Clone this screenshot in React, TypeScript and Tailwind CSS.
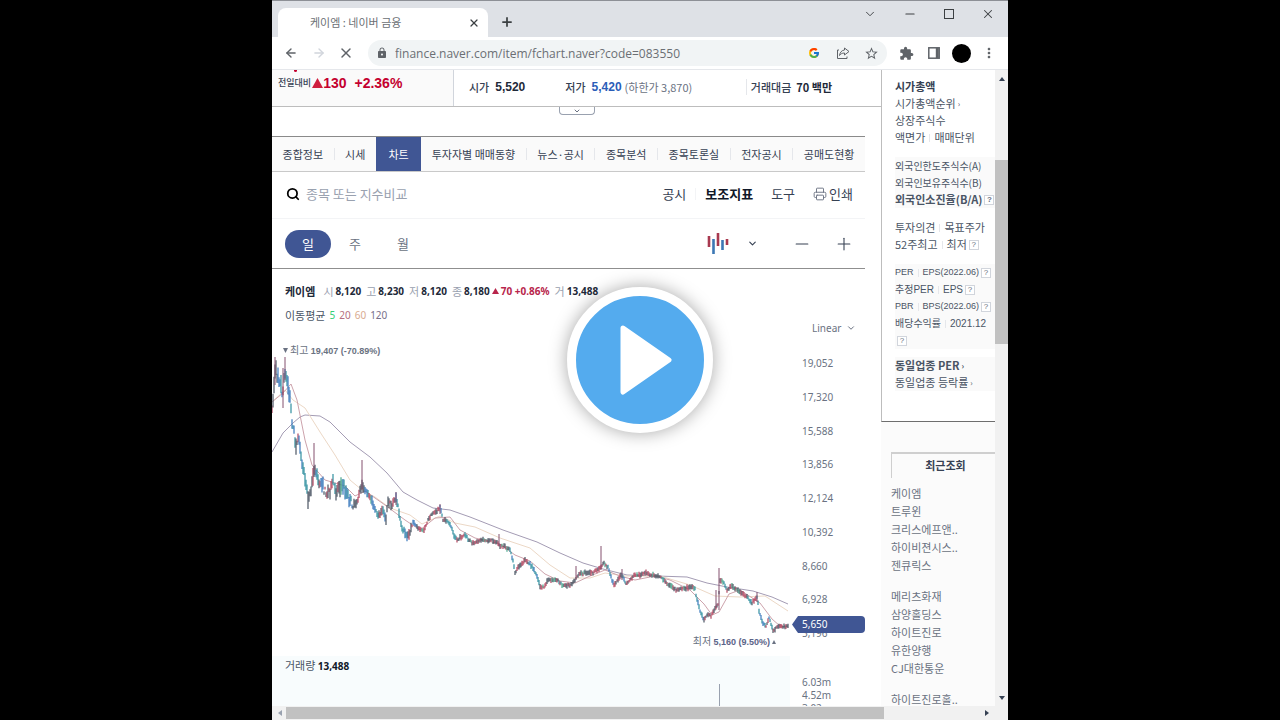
// src/App.tsx
import React from "react";
import { ArrowLeft, ArrowRight, ChevronDown, Minus, Plus, Printer, Search, Square, X } from "lucide-react";
import { FcGoogle } from "react-icons/fc";
import { MdExtension, MdLock, MdMoreVert, MdStarBorder } from "react-icons/md";

const tabs = [
  { label: "종합정보" },
  { label: "시세", sep: true },
  { label: "차트", active: true },
  { label: "투자자별 매매동향" },
  { label: "뉴스·공시", sep: true },
  { label: "종목분석", sep: true },
  { label: "종목토론실", sep: true },
  { label: "전자공시", sep: true },
  { label: "공매도현황", sep: true },
];

const ohlc = [
  { label: "시", value: "8,120" },
  { label: "고", value: "8,230" },
  { label: "저", value: "8,120" },
  { label: "종", value: "8,180", change: true },
  { label: "거", value: "13,488" },
];

const axis = ["19,052", "17,320", "15,588", "13,856", "12,124", "10,392", "8,660", "6,928", "5,196"];

const recent = [
  ["케이엠", "트루윈", "크리스에프앤..", "하이비젼시스..", "젠큐릭스"],
  ["메리츠화재", "삼양홀딩스", "하이트진로", "유한양행", "CJ대한통운"],
  ["하이트진로홀.."],
];

// [x, y] along the price curve, in chart units
const price = [
  [0, 66], [1, 58], [3, 32], [6, 34], [9, 48], [11, 52], [13, 32], [14, 38], [16, 47], [18, 60], [21, 88],
  [24, 104], [27, 102], [30, 118], [33, 138], [36, 158], [39, 150], [42, 132], [44, 132], [47, 146], [49, 140],
  [52, 150], [55, 153], [58, 148], [61, 143], [64, 151], [67, 146], [71, 146], [75, 156], [78, 160], [81, 167],
  [85, 162], [87, 155], [90, 147], [93, 150], [97, 157], [100, 160], [103, 170], [107, 177], [111, 170],
  [114, 178], [116, 163], [120, 164], [124, 158], [126, 167], [129, 186], [133, 193], [136, 198], [139, 189],
  [141, 182], [145, 187], [149, 190], [152, 190], [156, 180], [160, 174], [164, 172], [168, 167], [171, 180],
  [175, 181], [179, 186], [182, 195], [185, 200], [189, 197], [193, 195], [197, 200], [202, 204], [206, 201],
  [211, 199], [215, 201], [220, 200], [225, 203], [228, 206], [233, 207], [238, 210], [241, 221], [243, 233],
  [246, 227], [250, 224], [253, 220], [257, 223], [261, 228], [265, 236], [268, 246], [272, 248], [275, 241],
  [280, 240], [286, 240], [291, 246], [296, 245], [301, 243], [305, 236], [310, 233], [316, 233], [322, 232],
  [328, 228], [332, 223], [336, 227], [339, 237], [342, 245], [346, 239], [350, 235], [354, 244], [358, 240],
  [362, 235], [368, 235], [374, 233], [379, 235], [384, 235], [389, 237], [394, 243], [399, 246], [404, 250],
  [409, 248], [414, 248], [420, 247], [423, 250], [425, 260], [428, 270], [432, 280], [435, 274], [439, 276],
  [443, 268], [446, 265], [448, 240], [452, 243], [455, 250], [460, 246], [465, 250], [470, 253], [476, 258],
  [480, 263], [485, 257], [487, 270], [490, 282], [494, 287], [497, 278], [501, 291], [505, 287], [510, 287],
  [516, 286],
];

// [x, top, bottom]
const spikes = [
  [13, 17, 40], [3, 17, 45], [11, 28, 68], [42, 103, 134], [90, 120, 150], [124, 152, 165], [168, 164, 174],
  [227, 194, 206], [304, 226, 240], [329, 206, 230], [350, 229, 240], [444, 250, 268], [447, 228, 270], [485, 252, 262],
];

const averages = [
  {
    color: "#a49cb4",
    points:
      "0,112 11,93 21,83 28,77 33,75 48,76 58,82 66,90 78,102 98,117 115,133 131,152 145,160 161,168 178,170 198,177 231,190 265,202 288,213 311,223 331,229 355,235 385,236 415,237 435,243 455,247 481,251 500,257 516,264",
  },
  {
    color: "#ecd8c6",
    points:
      "0,62 13,50 21,60 33,68 48,92 63,115 78,140 90,150 103,157 118,168 138,175 150,184 168,176 183,183 203,187 228,198 258,208 278,225 298,238 318,238 333,233 353,236 388,236 418,245 443,256 468,257 493,256 516,271",
  },
  {
    color: "#cda3ac",
    points:
      "0,62 11,53 19,44 25,60 33,100 40,125 53,140 73,146 83,156 93,151 113,165 133,180 148,190 163,178 178,177 188,190 203,198 228,204 243,215 258,221 273,234 288,241 303,243 318,236 333,230 348,236 363,240 383,236 398,240 418,250 432,264 440,275 447,272 457,254 468,250 488,263 500,279 508,286 516,287",
  },
];

const candleColors = ["#b2455f", "#2f8f9f", "#4b5563", "#3a78bd", "#4aa58c"];

function priceAt(x: number) {
  const i = price.findIndex((p) => p[0] >= x);
  if (i <= 0) return price[0][1];
  const [x0, y0] = price[i - 1];
  const [x1, y1] = price[i];
  return y0 + ((y1 - y0) * (x - x0)) / (x1 - x0);
}

function makeCandles() {
  const list = [];
  let seed = 7;
  const rand = () => {
    seed = (seed * 16807) % 2147483647;
    return seed / 2147483647;
  };
  for (let x = 0; x <= 516; x++) {
    const mid = priceAt(x);
    const spread = x < 20 ? 11 : x < 80 ? 8 : x < 140 ? 5 : 2;
    const slope = priceAt(Math.min(516, x + 1)) - mid;
    const pick = rand();
    let color = candleColors[2];
    if (slope > 1.2) color = pick < 0.6 ? candleColors[1] : candleColors[3];
    else if (slope < -0.3) color = pick < 0.6 ? candleColors[0] : candleColors[2];
    else if (pick < 0.3) color = candleColors[0];
    else if (pick < 0.5) color = candleColors[4];
    const drift = (rand() - 0.5) * spread * 0.8;
    list.push({ x, y1: mid + drift - 1 - rand() * spread, y2: mid + drift + 1 + rand() * spread, color });
  }
  return list;
}

const candles = makeCandles();

function Triangle({ className }: { className: string }) {
  return (
    <svg viewBox="0 0 10 10" preserveAspectRatio="none" className={className} aria-hidden="true">
      <path d="M5 0 L10 10 H0 Z" fill="currentColor" />
    </svg>
  );
}

function Help() {
  return (
    <button className="ml-[2px] h-[10px] w-[10px] shrink-0 border border-gray-300 bg-white text-center font-['Liberation_Sans'] text-[8px] leading-[8px] text-gray-500">
      ?
    </button>
  );
}

function Bar() {
  return <i className="mx-1 h-2 w-px shrink-0 bg-gray-200" />;
}

function BrowserBar() {
  return (
    <header className="shrink-0 border-t border-[#8d9096] bg-[#dee1e6]">
      {/* Tab strip */}
      <div className="flex h-9 items-end pl-[6px]">
        <div className="flex h-[29px] w-[210px] items-center justify-between rounded-t-lg bg-white pr-2 pl-8 text-[11px] text-[#6b6f74]">
          <span>케이엠 : 네이버 금융</span>
          <button aria-label="탭 닫기">
            <X className="h-3 w-3 text-[#3c4043]" strokeWidth={2.5} />
          </button>
        </div>
        <button aria-label="새 탭" className="mb-2 ml-3">
          <Plus className="h-[14px] w-[14px] text-[#3c4043]" strokeWidth={3} />
        </button>
        <div className="mb-4 ml-auto flex items-center gap-[26px] pr-[13px] text-[#3c4043]">
          <button aria-label="탭 검색"><ChevronDown className="h-[14px] w-[14px]" strokeWidth={1.6} /></button>
          <button aria-label="최소화"><Minus className="h-[14px] w-[14px]" strokeWidth={2} /></button>
          <button aria-label="최대화" className="flex h-3 w-3 items-center justify-center">
            <i className="h-[10px] w-[10px] border border-[#3c4043]" />
          </button>
          <button aria-label="닫기"><X className="h-[14px] w-[14px]" strokeWidth={1.8} /></button>
        </div>
      </div>

      {/* Address row */}
      <div className="flex h-[33px] items-center border-b border-gray-200 bg-white pr-[11px] pl-3 text-[#5f6368]">
        <button aria-label="뒤로"><ArrowLeft className="h-[14px] w-[14px]" strokeWidth={2.4} /></button>
        <button aria-label="앞으로" className="ml-[14px]"><ArrowRight className="h-[14px] w-[14px] text-gray-300" strokeWidth={2.4} /></button>
        <button aria-label="중지" className="ml-3"><X className="h-4 w-4" strokeWidth={2.2} /></button>
        <div className="ml-[14px] flex h-[26px] flex-1 items-center rounded-full bg-[#f1f4f5] px-2">
          <MdLock className="h-3 w-3 shrink-0" />
          <input
            aria-label="주소"
            defaultValue="finance.naver.com/item/fchart.naver?code=083550"
            className="ml-[7px] min-w-0 flex-1 bg-transparent pt-[2px] font-['Open_Sans',sans-serif] text-[12px] text-[#6b6f74] outline-none"
          />
          <FcGoogle className="h-3 w-3" />
          <button aria-label="공유" className="ml-4">
            <svg viewBox="0 0 14 14" className="h-[14px] w-[14px]" fill="none" stroke="currentColor" strokeWidth="1">
              <path d="M3 4 H1.5 V12.5 H11 V10.5" />
              <path d="M8.5 2 L13 5.5 L8.5 9 V7 C6 7 4.500 8 3.500 9.500 C4 6.500 5.500 4.300 8.500 4 Z" strokeLinejoin="round" />
            </svg>
          </button>
          <button aria-label="북마크" className="ml-[14px]"><MdStarBorder className="h-[15px] w-[15px]" /></button>
        </div>
        <button aria-label="확장 프로그램" className="ml-3"><MdExtension className="h-[15px] w-[15px]" /></button>
        <button aria-label="측면 패널" className="ml-[14px]">
          <svg viewBox="0 0 12 12" className="h-3 w-3" fill="none" stroke="currentColor" strokeWidth="1.500">
            <rect x="0.800" y="0.800" width="10.400" height="10.400" />
            <path d="M9.300 1 V11" strokeWidth="3" />
          </svg>
        </button>
        <button aria-label="프로필" className="ml-3 h-[19px] w-[19px] rounded-full bg-black" />
        <button aria-label="메뉴" className="ml-[10px]"><MdMoreVert className="h-4 w-4" /></button>
      </div>
    </header>
  );
}

function Summary() {
  return (
    <div className="flex h-[37px] border-b border-[#bdbdbd] text-[11px]">
      <div className="w-[182px] shrink-0 border-r border-gray-300 bg-[#fafafa] pl-[6px]">
        <i className="ml-4 block h-[2px] w-[3px] rounded-b bg-[#c4002f]" />
        <div className="flex h-[22px] items-center">
          <span className="text-[9px] font-medium text-gray-700">전일대비</span>
          <Triangle className="ml-px h-[10px] w-[11px] text-[#cf1f3f]" />
          <strong className="font-['Liberation_Sans'] text-[14px] text-[#c4002f]">130</strong>
          <strong className="ml-2 font-['Liberation_Sans'] text-[14px] text-[#c4002f]">+2.36%</strong>
        </div>
      </div>
      <dl className="flex flex-1 items-center pb-[2px] pl-[15px] text-gray-700">
        <dt className="font-medium">시가</dt>
        <dd className="ml-[6px] font-['Liberation_Sans'] text-[12px] font-bold text-gray-800">5,520</dd>
        <dt className="ml-10 font-medium">저가</dt>
        <dd className="ml-[6px] font-['Liberation_Sans'] text-[12px] font-bold text-[#2a5db8]">5,420</dd>
        <dd className="ml-[3px] text-gray-500">(하한가 3,870)</dd>
        <dt className="mr-[5px] ml-auto border-l border-gray-200 pl-1 font-medium">거래대금</dt>
        <dd className="mr-[49px] font-bold text-gray-800">70 백만</dd>
      </dl>
    </div>
  );
}

function Toolbar() {
  return (
    <>
      <nav className="mt-5 border-t border-b border-t-[#8a8a8a] border-b-[#c9c9c9] bg-[#fafafa]">
        <ul className="flex h-[34px] text-[11px] text-gray-700">
          {tabs.map((tab) => (
            <li key={tab.label} className={tab.active ? "flex flex-auto items-center bg-[#405694] px-[2px] text-white" : "flex flex-auto items-center"}>
              {tab.sep && <i className="h-3 w-px bg-gray-200" />}
              <a href="#chart" className="flex-1 text-center whitespace-nowrap">{tab.label}</a>
            </li>
          ))}
        </ul>
      </nav>

      <div className="flex h-[47px] items-center border-b border-gray-100 pr-3 pb-[2px] pl-[14px] text-[13px] text-gray-700">
        <Search className="h-[14px] w-[14px] text-black" strokeWidth={3} />
        <input
          aria-label="종목 또는 지수비교"
          placeholder="종목 또는 지수비교"
          className="ml-[6px] min-w-0 flex-1 outline-none placeholder:text-gray-400"
        />
        <button>공시</button>
        <i className="mx-[9px] h-3 w-px bg-gray-100" />
        <button className="font-bold text-gray-900">보조지표</button>
        <button className="ml-[18px]">도구</button>
        <button className="ml-[18px] flex items-center gap-[2px]">
          <Printer className="h-[14px] w-[14px] text-gray-500" strokeWidth={1.6} />
          인쇄
        </button>
      </div>

      <div className="flex h-[50px] items-center border-b border-[#8f8f8f] pr-[11px] pl-[13px] text-[13px] text-gray-500">
        <button className="h-7 w-[46px] rounded-full bg-[#405694] text-white">일</button>
        <button className="ml-[18px]">주</button>
        <button className="ml-9">월</button>
        <button aria-label="차트 유형" className="ml-auto flex items-center">
          <svg viewBox="0 0 22 22" className="h-[22px] w-[22px]" strokeWidth="2.600">
            <path d="M2 3 V14 M11 0 V13 M20 6 V12" stroke="#a8394f" />
            <path d="M6.500 6 V21 M15.500 7 V17" stroke="#3d78b5" />
          </svg>
          <ChevronDown className="ml-[18px] h-[11px] w-[11px] text-gray-700" strokeWidth={2.5} />
        </button>
        <button aria-label="축소" className="ml-[34px]"><Minus className="h-5 w-5 text-gray-700" strokeWidth={1.3} /></button>
        <button aria-label="확대" className="ml-[22px]"><Plus className="h-5 w-5 text-gray-700" strokeWidth={1.3} /></button>
      </div>
    </>
  );
}

function Chart() {
  return (
    <section id="chart" className="flex">
      <div className="min-w-0 flex-1">
        <div className="flex h-[46px] items-center pb-[2px] pl-[13px] text-[11px]">
          <strong className="mr-[3px] text-gray-800">케이엠</strong>
          {ohlc.map((item) => (
            <span key={item.label} className="ml-[5px] flex items-center gap-[2px] text-gray-400">
              {item.label}
              <strong className="font-['Noto_Sans'] text-[10px] text-gray-800">{item.value}</strong>
              {item.change && (
                <strong className="flex items-center gap-[2px] font-['Noto_Sans'] text-[10px] text-[#b8254b]">
                  <Triangle className="h-[6px] w-[7px]" />
                  70 +0.86%
                </strong>
              )}
            </span>
          ))}
        </div>
        <p className="flex h-0 items-center gap-1 pl-[13px] text-[11px] text-gray-600">
          이동평균
          <span className="flex gap-1 font-['Noto_Sans'] text-[10px]">
            <span className="text-[#35cf77]">5</span>
            <span className="text-[#b56f80]">20</span>
            <span className="text-[#d9ab90]">60</span>
            <span className="text-[#77708a]">120</span>
          </span>
        </p>

        <div className="relative mt-[25px]">
          <svg viewBox="0 0 518 316" preserveAspectRatio="none" className="h-[316px] w-full" role="img" aria-label="케이엠 일봉 차트">
            {averages.map((line) => (
              <polyline key={line.color} points={line.points} fill="none" stroke={line.color} strokeWidth="1" />
            ))}
            {candles.map((c) => (
              <path key={c.x} d={`M${c.x} ${c.y1} V${c.y2}`} stroke={c.color} strokeWidth="1.200" />
            ))}
            {spikes.map(([x, top, bottom]) => (
              <path key={x} d={`M${x} ${top} V${bottom}`} stroke="#84506f" strokeWidth="1" />
            ))}
          </svg>
          <p className="absolute top-[3px] left-[11px] flex items-center gap-[2px] text-[10px] leading-[14px] text-gray-500">
            <Triangle className="h-[5px] w-[5px] rotate-180" />
            <span>최고 <b className="font-['Liberation_Sans'] text-[9px]">19,407 (-70.89%)</b></span>
          </p>
          <p className="absolute right-[14px] bottom-[7px] flex items-center gap-[2px] text-[10px] leading-[14px] text-gray-500">
            <span>최저 <b className="font-['Liberation_Sans'] text-[9px] text-[#5c6488]">5,160 (9.50%)</b></span>
            <Triangle className="h-1 w-1" />
          </p>
        </div>

        <div className="relative h-20 bg-[#f8fcfd] pl-[13px]">
          <p className="text-[11px] leading-[18px] text-gray-600">
            거래량 <b className="font-['Noto_Sans'] text-[10px] text-gray-900">13,488</b>
          </p>
          <i className="absolute top-7 right-[70px] h-12 w-px bg-gray-400" />
        </div>
      </div>

      <div className="relative w-[75px] shrink-0 pt-[52px] pl-3 font-['Noto_Sans',sans-serif] text-[10px] leading-[14px] text-gray-500">
        <button className="ml-[10px] flex items-center gap-[5px]">
          Linear
          <ChevronDown className="h-[10px] w-[10px]" strokeWidth={2.4} />
        </button>
        <ol className="mt-[21px] flex h-[284px] flex-col justify-between">
          {axis.map((v) => (
            <li key={v}>{v}</li>
          ))}
        </ol>
        <div className="absolute top-[347px] right-0 left-[2px] flex h-[17px] items-center">
          <svg viewBox="0 0 6 17" className="h-[17px] w-[6px]" aria-hidden="true">
            <path d="M6 0 L0 8.500 L6 17 Z" fill="#405694" />
          </svg>
          <span className="flex-1 self-stretch rounded-r-sm bg-[#405694] pl-1 leading-[17px] text-white">5,650</span>
        </div>
        <ol className="mt-9 leading-[13px]">
          <li>6.03m</li>
          <li>4.52m</li>
          <li>3.02m</li>
        </ol>
      </div>
    </section>
  );
}

function Sidebar() {
  return (
    <aside className="w-[114px] shrink-0 bg-[#fbfbfb]">
      <div className="h-[352px] border-b border-l border-b-[#6e6e6e] border-l-[#bdbdbd] bg-white pl-[13px] text-[11px] leading-[17px] whitespace-nowrap text-gray-600 [&_p]:flex [&_p]:h-[17px] [&_p]:items-center">
        <div className="pt-2">
          <h2 className="h-[17px] font-bold text-gray-700">시가총액</h2>
          <p><a href="#rank">시가총액순위</a><span className="ml-[2px] text-[8px]">›</span></p>
          <p>상장주식수</p>
          <p>액면가<Bar />매매단위</p>
        </div>
        <div className="mt-[11px] bg-[#fafafa] text-[10px]">
          <p>외국인한도주식수(A)</p>
          <p>외국인보유주식수(B)</p>
          <p className="text-[11px] font-bold">외국인소진율(B/A)<Help /></p>
        </div>
        <div className="mt-[11px]">
          <p>투자의견<Bar />목표주가</p>
          <p>52주최고<Bar />최저<Help /></p>
        </div>
        <div className="mt-[11px] bg-[#fafafa] font-['Liberation_Sans','Noto_Sans_CJK_KR',sans-serif] text-[10px]">
          <p className="text-[9px]">PER<Bar />EPS(2022.06)<Help /></p>
          <p>추정PER<Bar />EPS<Help /></p>
          <p className="text-[9px]">PBR<Bar />BPS(2022.06)<Help /></p>
          <p>배당수익률<Bar />2021.12</p>
          <p><Help /></p>
        </div>
        <div className="mt-2 bg-[#fafafa]">
          <p className="font-bold">동일업종 PER<span className="ml-[2px] text-[8px]">›</span></p>
          <p>동일업종 등락률<span className="ml-[2px] text-[8px]">›</span></p>
        </div>
      </div>

      <div className="mt-[30px] ml-[10px] text-[11px] leading-[18px] text-gray-500">
        <h2 className="h-[26px] border-t-2 border-l border-[#cfcfcf] pl-1 text-center text-[11px] leading-[22px] font-bold text-gray-700">최근조회</h2>
        {recent.map((group, i) => (
          <ul key={i} className={i === 0 ? "mt-[6px]" : "mt-[13px]"}>
            {group.map((name) => (
              <li key={name}><a href="#item">{name}</a></li>
            ))}
          </ul>
        ))}
      </div>
    </aside>
  );
}

export default function App() {
  return (
    <div className="relative h-screen overflow-hidden bg-black">
      <div className="mx-auto flex h-full w-full max-w-[736px] flex-col overflow-hidden bg-white font-['Noto_Sans_CJK_KR',sans-serif]">
        <BrowserBar />
        <div className="flex min-h-0 flex-1">
          <div className="flex min-w-0 flex-1 flex-col">
            <div className="flex min-h-0 flex-1 overflow-hidden">
              <main className="min-w-0 flex-1">
                <Summary />
                <button aria-label="펼치기" className="mx-auto -mb-2 flex h-2 w-9 items-center justify-center rounded-b border border-t-0 border-gray-400">
                  <ChevronDown className="h-2 w-2 text-gray-500" strokeWidth={3} />
                </button>
                <div className="pt-[9px] pr-4">
                  <Toolbar />
                  <Chart />
                </div>
              </main>
              <Sidebar />
            </div>

            {/* Horizontal scrollbar */}
            <div className="flex h-[14px] shrink-0 items-center bg-[#f1f1f1] px-[5px] text-gray-600">
              <Triangle className="h-1 w-[6px] -rotate-90 text-gray-400" />
              <i className="mr-[100px] ml-[3px] h-3 flex-1 bg-[#c1c1c1]" />
              <Triangle className="h-1 w-[6px] rotate-90 text-gray-700" />
            </div>
          </div>

          {/* Vertical scrollbar */}
          <div className="flex w-[13px] shrink-0 flex-col items-center bg-[#f1f1f1] pt-[7px] pb-5 text-gray-700">
            <Triangle className="h-1 w-[6px]" />
            <i className="mt-[79px] h-[184px] w-full bg-[#c1c1c1]" />
            <Triangle className="mt-auto h-1 w-[6px] rotate-180" />
          </div>
        </div>
      </div>

      {/* Play overlay */}
      <div className="pointer-events-none absolute inset-0 flex items-center justify-center">
        <button
          aria-label="재생"
          className="pointer-events-auto flex h-[146px] w-[146px] items-center justify-center rounded-full border-[9px] border-white bg-[#54abee] shadow-[0_0_18px_rgba(0,0,0,0.35)]"
        >
          <svg viewBox="0 0 52 70" className="ml-[11px] h-[70px] w-[52px]" aria-hidden="true">
            <path d="M3 3 L49 35 L3 67 Z" fill="#fff" stroke="#fff" strokeWidth="5" strokeLinejoin="round" />
          </svg>
        </button>
      </div>
    </div>
  );
}
